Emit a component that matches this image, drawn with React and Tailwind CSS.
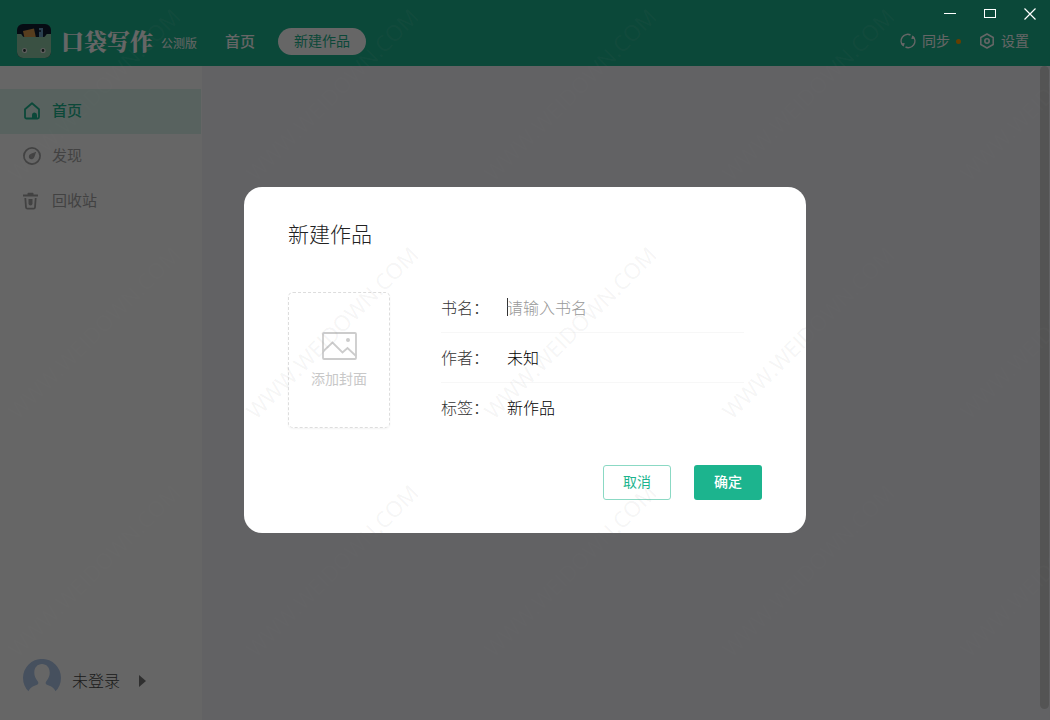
import React from "react";

const navItems = [
  { id: "home", label: "首页", icon: HomeIcon },
  { id: "discover", label: "发现", icon: CompassIcon },
  { id: "trash", label: "回收站", icon: TrashIcon },
];

const fields = [
  { name: "title", label: "书名：", placeholder: "请输入书名" },
  { name: "author", label: "作者：" },
  { name: "tag", label: "标签：" },
];

function Logo() {
  return (
    <svg viewBox="0 0 34 34" className="size-[34px]" aria-hidden="true">
      <rect width="34" height="34" rx="6" fill="#101c30" />
      <path d="M6 7 17 4.500l2 9.500H7.500z" fill="#d69a4c" />
      <path d="M22 4h4v10h-4z" fill="#6a9fc4" />
      <path d="M22 7h2" stroke="#101c30" strokeWidth="1.500" />
      <path
        d="M0 10h4c1 0 1.400 3 3 3h20c1.600 0 2-3 3-3h4v18a6 6 0 0 1-6 6H6a6 6 0 0 1-6-6z"
        fill="#92cba8"
      />
      <circle cx="7.500" cy="26.500" r="2" fill="#2c3a3a" stroke="#e8e8e8" strokeWidth="1.200" />
      <circle cx="26" cy="26.500" r="2" fill="#2c3a3a" stroke="#e8e8e8" strokeWidth="1.200" />
    </svg>
  );
}

function HomeIcon() {
  return (
    <svg viewBox="0 0 18 18" className="size-[18px]" fill="none" aria-hidden="true">
      <path
        d="M2 7.200 9 1.300l7 5.900V15a1.500 1.500 0 0 1-1.500 1.500h-11A1.500 1.500 0 0 1 2 15z"
        stroke="currentColor"
        strokeWidth="1.800"
        strokeLinejoin="round"
      />
      <path d="M9 16v-3a2.500 2.500 0 0 1 5 0v3z" fill="currentColor" />
    </svg>
  );
}

function CompassIcon() {
  return (
    <svg viewBox="0 0 18 18" className="size-[18px]" fill="none" aria-hidden="true">
      <circle cx="9" cy="9" r="8.100" stroke="currentColor" strokeWidth="1.800" />
      <path
        d="M13.200 4.800 11.400 10a3 3 0 0 1-4.900 1.500A3 3 0 0 1 8 6.700z"
        fill="currentColor"
      />
    </svg>
  );
}

function TrashIcon() {
  return (
    <svg viewBox="0 0 18 18" className="size-[18px]" fill="none" aria-hidden="true">
      <path
        d="M4.500 2.500V1.700c0-.6.4-1 1-1h4c.6 0 1 .4 1 1v.8H15v2H0v-2z"
        fill="currentColor"
      />
      <path
        d="M2.300 6 3 15.300c.1.900.6 1.300 1.400 1.300h6.200c.8 0 1.300-.4 1.400-1.300L12.700 6"
        stroke="currentColor"
        strokeWidth="1.800"
      />
      <path d="M5.500 7h4v4.500a2 2 0 0 1-4 0z" fill="currentColor" />
    </svg>
  );
}

function SyncIcon() {
  return (
    <svg viewBox="0 0 16 16" className="size-4" fill="none" aria-hidden="true">
      <path
        d="M3 12.600A6.600 6.600 0 0 1 10.500 2M13 3.400A6.600 6.600 0 0 1 5.500 14"
        stroke="currentColor"
        strokeWidth="1.500"
      />
      <path d="m1 10.300 3.700-.2-1 3.700zM15 5.700l-3.700.2 1-3.700z" fill="currentColor" />
    </svg>
  );
}

function SettingsIcon() {
  return (
    <svg viewBox="0 0 16 16" className="size-4" fill="none" aria-hidden="true">
      <path
        d="M8 1 14.200 4.500v7L8 15l-6.200-3.500v-7z"
        stroke="currentColor"
        strokeWidth="1.500"
        strokeLinejoin="round"
      />
      <circle cx="8" cy="8" r="2.200" stroke="currentColor" strokeWidth="1.600" />
    </svg>
  );
}

function Avatar() {
  return (
    <svg viewBox="0 0 38 38" className="size-[38px]" aria-hidden="true">
      <path
        d="M5.500 32.300A19 19 0 1 1 32.500 32.300C31 28.500 28 27.200 24.500 26c-2.200-.8-2.300-2.300-1-4 2-2.600 3.200-5 3.200-8.500C26.700 8.500 23.500 5 19 5s-7.700 3.500-7.700 8.500c0 3.500 1.200 5.900 3.200 8.500 1.300 1.700 1.200 3.200-1 4-3.500 1.200-6.500 2.500-8 6.300z"
        fill="#b0c8ea"
      />
    </svg>
  );
}

function PictureIcon() {
  return (
    <svg viewBox="0 0 35 28" className="h-7 w-[35px]" fill="none" aria-hidden="true">
      <rect x="1" y="1" width="33" height="26" rx="1" stroke="#ccc" strokeWidth="1.800" />
      <path d="m1 19.500 9.500-9 10 10 5-4.500 8.500 8" stroke="#ccc" strokeWidth="1.800" />
      <circle cx="26" cy="8" r="2" fill="#ccc" />
    </svg>
  );
}

function Header() {
  return (
    <header className="flex h-[66px] items-center bg-[#1cb48e] px-[17px] pt-4 text-white">
      <div className="flex items-center">
        <Logo />
        <span className="ml-2.5 text-[23px] leading-8 font-black font-[Noto_Serif_CJK_SC,Noto_Sans_CJK_SC,serif]">
          口袋写作
        </span>
        <span className="ml-2 pt-1 text-xs">公测版</span>
      </div>
      <nav className="ml-7 flex items-center gap-[23px]">
        <a href="#home" className="text-[15px] font-medium">
          首页
        </a>
        <button
          type="button"
          className="h-[27px] rounded-full bg-white px-4 pb-0.5 text-sm text-[#1cb48e]"
        >
          新建作品
        </button>
      </nav>
      <div className="ml-auto flex items-center gap-[18px] pr-1 text-sm">
        <button type="button" className="flex items-center gap-1.5">
          <SyncIcon />
          <span className="pb-0.5">同步</span>
          <span className="size-[5px] rounded-full bg-[#ff9c00]" />
        </button>
        <button type="button" className="flex items-center gap-1.5">
          <SettingsIcon />
          <span className="pb-0.5">设置</span>
        </button>
      </div>
    </header>
  );
}

function Sidebar() {
  return (
    <aside className="flex w-[202px] shrink-0 flex-col bg-white pt-[23px]">
      <nav>
        {navItems.map(({ id, label, icon: Icon }) => (
          <a
            key={id}
            href={`#${id}`}
            className={
              id === "home"
                ? "mr-px flex h-[45px] items-center gap-[11px] bg-[#dcf6ee] pb-0.5 pl-[23px] text-[15px] font-medium text-[#1cb48e]"
                : "mr-px flex h-[45px] items-center gap-[11px] pb-0.5 pl-[23px] text-[15px] text-[#a6a6a6]"
            }
          >
            <Icon />
            {label}
          </a>
        ))}
      </nav>
      <button
        type="button"
        className="mt-auto mb-[23px] flex items-center pl-[23px] text-base text-[#444]"
      >
        <Avatar />
        <span className="ml-[11px] pt-1 font-light">未登录</span>
        <svg viewBox="0 0 7 12" className="mt-1.5 ml-[19px] h-3 w-[7px]" aria-hidden="true">
          <path d="M0 0v12l7-6z" fill="#777" />
        </svg>
      </button>
    </aside>
  );
}

function WindowControls() {
  return (
    <div className="absolute top-0 right-0 flex text-white">
      <button type="button" aria-label="最小化" className="grid h-[27px] w-10 place-items-center">
        <svg viewBox="0 0 12 12" className="size-3" fill="none" stroke="currentColor">
          <path d="M0 5.500h12" />
        </svg>
      </button>
      <button type="button" aria-label="最大化" className="grid h-[27px] w-10 place-items-center">
        <svg viewBox="0 0 12 12" className="size-3" fill="none" stroke="currentColor">
          <rect x=".5" y="1.500" width="11" height="8" />
        </svg>
      </button>
      <button type="button" aria-label="关闭" className="grid h-[27px] w-10 place-items-center">
        <svg viewBox="0 0 12 12" className="size-3" fill="none" stroke="currentColor">
          <path d="m.5.500 11 11M11.500.500l-11 11" strokeWidth="1.200" />
        </svg>
      </button>
    </div>
  );
}

function NewWorkDialog() {
  const [form, setForm] = React.useState({
    title: "",
    author: "未知",
    tag: "新作品",
  });

  function handleChange(e) {
    setForm((f) => ({ ...f, [e.target.name]: e.target.value }));
  }

  return (
    <form
      role="dialog"
      aria-labelledby="dialog-title"
      onSubmit={(e) => e.preventDefault()}
      className="w-full max-w-[562px] rounded-[18px] bg-white pt-[30px] pr-11 pb-[33px] pl-11"
    >
      <h2 id="dialog-title" className="text-[21px] leading-8 font-light text-[#222]">
        新建作品
      </h2>
      <div className="mt-[34px] flex items-start">
        <button
          type="button"
          className="mt-[9px] flex h-[136px] w-[102px] shrink-0 flex-col items-center justify-center gap-2 rounded-[5px] border border-dashed border-[#ddd] text-sm text-[#c8c8c8] shadow-xs"
        >
          <PictureIcon />
          添加封面
        </button>
        <div className="mr-[18px] ml-[51px] flex-1">
          {fields.map((field) => (
            <div
              key={field.name}
              className="flex h-[50px] items-center border-b border-[#f7f7f7] pb-0.5 text-base font-light last:border-transparent"
            >
              <label htmlFor={field.name} className="w-[66px] text-[#333]">
                {field.label}
              </label>
              {field.name === "title" && <span className="-mr-px h-[18px] w-px bg-[#333]" />}
              <input
                id={field.name}
                name={field.name}
                value={form[field.name]}
                onChange={handleChange}
                placeholder={field.placeholder}
                className="min-w-0 flex-1 text-black outline-none placeholder:text-[#999]"
              />
            </div>
          ))}
        </div>
      </div>
      <div className="mt-8 flex justify-end gap-[23px] text-sm">
        <button
          type="button"
          className="h-[35px] w-[68px] rounded-[3px] border border-[#8bd9c4] pb-1 text-[#1cb48e]"
        >
          取消
        </button>
        <button
          type="submit"
          className="h-[35px] w-[68px] rounded-[3px] bg-[#1cb48e] pb-1 font-medium text-white"
        >
          确定
        </button>
      </div>
    </form>
  );
}

function Watermark() {
  return (
    <div
      aria-hidden="true"
      className="pointer-events-none absolute inset-0 overflow-hidden font-[Open_Sans,sans-serif] text-[22px] text-[#777]/8"
    >
      <div className="-mt-[25px] -ml-[25px] grid auto-rows-[238px] grid-cols-[repeat(5,238px)] place-items-center">
        {Array.from({ length: 15 }, (_, i) => (
          <span key={i} className="-rotate-45">
            WWW.WEIDOWN.COM
          </span>
        ))}
      </div>
    </div>
  );
}

export default function App() {
  return (
    <div
      lang="zh-CN"
      className="relative flex min-h-screen flex-col overflow-hidden font-[Noto_Sans_CJK_SC,sans-serif]"
    >
      <Header />
      <div className="flex flex-1">
        <Sidebar />
        <main className="flex flex-1 justify-end bg-[#f5f5f9]">
          <div className="mr-px mb-[11px] w-[9px] rounded-full bg-[#d2d2d2]" />
        </main>
      </div>
      <div className="absolute inset-0 flex items-center justify-center bg-black/60">
        <NewWorkDialog />
        <WindowControls />
      </div>
      <Watermark />
    </div>
  );
}
